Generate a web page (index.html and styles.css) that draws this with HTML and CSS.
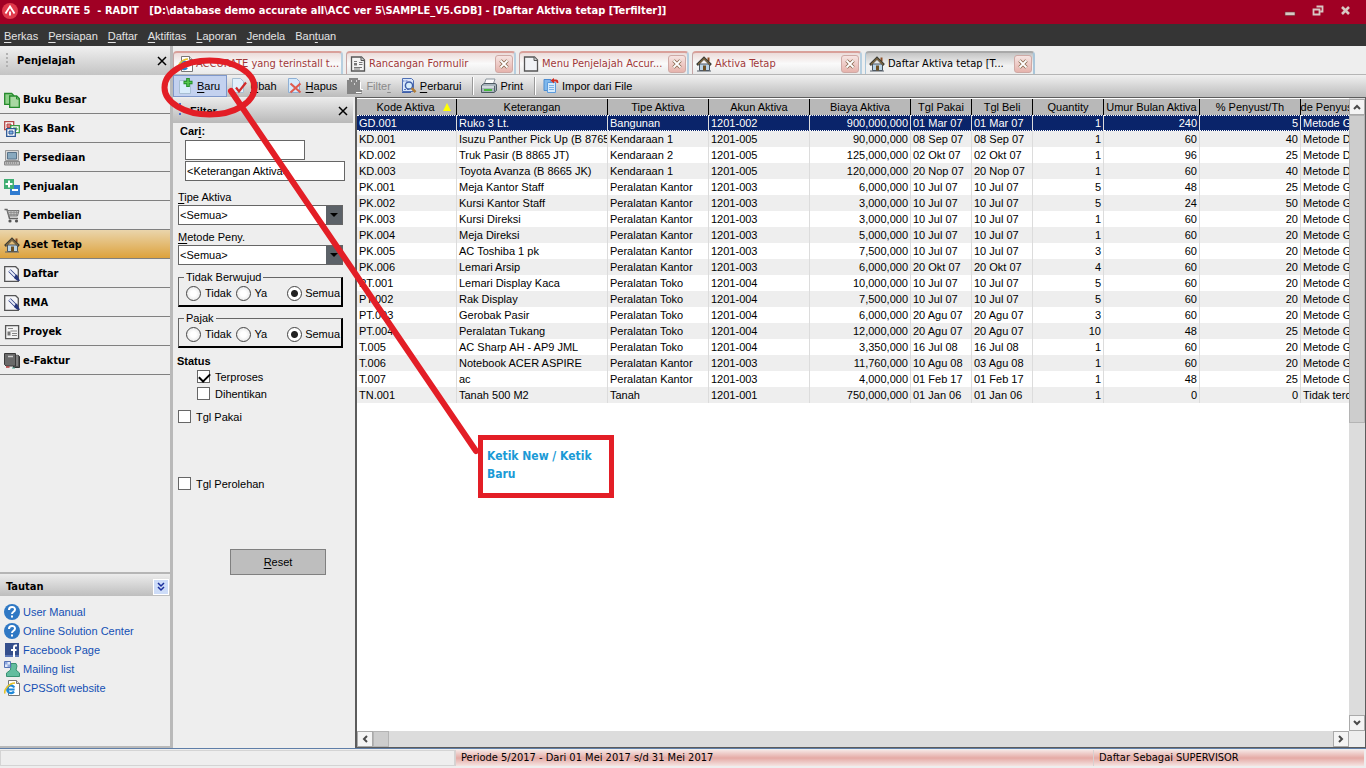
FILE: index.html
```html
<!DOCTYPE html>
<html lang="id">
<head>
<meta charset="utf-8">
<title>ACCURATE 5 - RADIT</title>
<link rel="stylesheet" href="styles.css">
</head>
<body>
<svg width="0" height="0" class="defs" aria-hidden="true">
  <defs>
    <symbol id="i-house" viewBox="0 0 16 16"><path d="M11.500 1.500h2v4h-2z" fill="#8a4a22"/><path d="M3.500 8h10v6.500h-10z" fill="#b9d3e6" stroke="#4a5560"/><path d="M1 9L8 2l7 7" fill="none" stroke="#3d3d35" stroke-width="2.500"/><path d="M2 8.500L8 2.600l6 5.900" fill="none" stroke="#a9834a"/><path d="M7 9.500h3V15H7z" fill="#6d4f22"/><path d="M1 15h14" stroke="#56606a"/></symbol>
    <symbol id="i-web" viewBox="0 0 16 16"><path d="M4.500.5h8l3 3v12h-11z" fill="#fff" stroke="#777"/><path d="M12.500.5v3h3" fill="#ddd" stroke="#777"/><path d="M10.600 9.500H3.500M10.300 7.500A3.800 3.800 0 1 0 10 11.500" fill="none" stroke="#1e88d8" stroke-width="2.200"/><path d="M1 13.500C-.5 10 5 3 11 3" fill="none" stroke="#e6c229" stroke-width="1.600"/></symbol>
    <symbol id="i-form" viewBox="0 0 16 16"><path d="M1.500 1h10l3 3v11h-13z" fill="#f4f4f4" stroke="#555" stroke-width="1.300"/><path d="M11 1v3.500h3.500" fill="#ccc" stroke="#555"/><path d="M4 5.500h3M9 6.500h3.500M9 8.500h3.500M4 11.500h8M4 13h6" stroke="#777"/><path d="M4 7h3v2.500H4z" fill="#777"/></symbol>
    <symbol id="i-page" viewBox="0 0 16 16"><path d="M1.500 1h10l3 3v11h-13z" fill="#f1f3f6" stroke="#555" stroke-width="1.300"/><path d="M11 1v3.500h3.500" fill="#ccc" stroke="#555"/></symbol>
    <symbol id="i-book" viewBox="0 0 16 16"><path d="M.7 1.500h7l2 2v8.800h-9z" fill="#8fd08a" stroke="#258a2c" stroke-width="1.300"/><path d="M5.700 4h7l2.600 2.600v8.700H5.700z" fill="#a9d8a2" stroke="#258a2c" stroke-width="1.300"/><path d="M12.500 4v3h3" fill="none" stroke="#258a2c"/></symbol>
    <symbol id="i-cash" viewBox="0 0 16 16"><path d="M.7.700h9v8h-9z" fill="#fff" stroke="#b44848" stroke-width="1.300"/><path d="M3 3h4v3.500H3z" fill="#e07a7a" stroke="#b44848"/><path d="M6.700 4.700h8.600v7H6.700z" fill="#fff" stroke="#3b9b45" stroke-width="1.300"/><path d="M9 7h4v2H9z" fill="#8fd08a" stroke="#3b9b45"/><path d="M2.700 7.700h8.600v7.600H2.700z" fill="#fff" stroke="#2c5794" stroke-width="1.300"/><path d="M5 10h4v3H5z" fill="#7fb2e6" stroke="#2c5794"/></symbol>
    <symbol id="i-pc" viewBox="0 0 16 16"><path d="M1.500.5h13v10h-13z" fill="#d8d8d8" stroke="#999"/><path d="M3.500 2.500h9v6.500h-9z" fill="#88a9bf" stroke="#58738a"/><path d="M.5 11.500h15v3.500H.5z" fill="#b9b9b9" stroke="#888"/><path d="M2 13h12" stroke="#777" stroke-dasharray="1 1"/></symbol>
    <symbol id="i-sale" viewBox="0 0 16 16"><path d="M6 6h10v10H6z" fill="#2f7bd0"/><path d="M8 11h6" stroke="#fff" stroke-width="2"/><path d="M0 0h10v10H0z" fill="#3fae72"/><path d="M5 1.500v7M1.500 5h7" stroke="#fff" stroke-width="2"/></symbol>
    <symbol id="i-cart" viewBox="0 0 16 16"><path d="M.5 1.500h2.500l2.500 9h8.500" fill="none" stroke="#666" stroke-width="1.500"/><path d="M3.500 2.500h11.500l-1.500 5.500H5z" fill="#c4c4c4" stroke="#777"/><path d="M5 4.500h9M5 6.500h9M7 2v6M10 2v6M12.500 2v6" stroke="#888" stroke-width=".7"/><circle cx="6" cy="13" r="1.600" fill="#555"/><circle cx="12.500" cy="13" r="1.600" fill="#555"/></symbol>
    <symbol id="i-note" viewBox="0 0 16 16"><path d="M.7.700h11l2.600 2.600v12H.7z" fill="#f4f5f8" stroke="#555" stroke-width="1.300"/><path d="M5.500 4.500l7 7" stroke="#26367c" stroke-width="3.400"/><path d="M5.500 4.500l6 6" stroke="#e9eefc" stroke-width="2"/><path d="M11 9.500l2-1 3 6.500-3-.5-3-2.500z" fill="#26367c"/></symbol>
    <symbol id="i-proj" viewBox="0 0 16 16"><path d="M1.600 1.600h13v13h-13z" fill="#f4f4f4" stroke="#555" stroke-width="1.300"/><path d="M4 4.500h5M6.500 7h6.500M8 9.500h5M8 11.500h5" stroke="#888"/><path d="M3.500 7.500h3v4h-3z" fill="#777"/></symbol>
    <symbol id="i-tax" viewBox="0 0 16 16"><path d="M9 2.500h5.500l1 1v11h-6z" fill="#555" stroke="#333"/><path d="M.5.500h11v12.500H2L.5 11.500z" fill="#6a6a6a" stroke="#3a3a3a"/><path d="M4 3.500h5" stroke="#ccc" stroke-width="1.500"/><path d="M2 14h3.500" stroke="#b03838" stroke-width="1.500"/><path d="M8 15h3" stroke="#47a28e"/><path d="M13 1v12" stroke="#aaa"/></symbol>
    <symbol id="i-help" viewBox="0 0 16 16"><circle cx="8" cy="8" r="8" fill="#2f78c4"/><path d="M5 6c0-4 6-4 6-.5C11 8 8 7.500 8 10" fill="none" stroke="#fff" stroke-width="2"/><path d="M7 11.500h2v2H7z" fill="#fff"/></symbol>
    <symbol id="i-fb" viewBox="0 0 16 16"><path d="M1 1h14v14H1z" fill="#354f8c"/><path d="M1 13h14v2H1z" fill="#5b76b4"/><path d="M13 3.500h-1.500Q10 3.500 10 5.500V15M7 8h5.500" fill="none" stroke="#fff" stroke-width="2"/></symbol>
    <symbol id="i-mail" viewBox="0 0 16 16"><path d="M7 2.500h5l1 2.500-1 4 3.500 3v3.500h-13V12l4-3z" fill="#63bd9f" stroke="#399273"/><path d="M.5.500h6v6h-6z" fill="#dfe8fa" stroke="#5673b5"/><path d="M1 1h2.500v2.500H1zM3.500 3.500H6V6H3.500z" fill="#8fa9dd"/></symbol>
    <symbol id="i-new" viewBox="0 0 16 16"><path d="M1.500 2.500h8l3 3v10h-11z" fill="#d9ecfb" stroke="#a8bfd4"/><path d="M10 0v9M5.500 4.500h9" stroke="#1d8a25" stroke-width="3.600"/><path d="M10 .8v7.400M6.300 4.500h7.400" stroke="#55c84e" stroke-width="1.600"/></symbol>
    <symbol id="i-edit" viewBox="0 0 16 16"><path d="M1.500.5h8l3 3v11h-11z" fill="#e1f0fc" stroke="#a8bfd4"/><path d="M5 9.500l3 4 7-9" fill="none" stroke="#d02a2a" stroke-width="2.200"/></symbol>
    <symbol id="i-del" viewBox="0 0 16 16"><path d="M1.500.5h8l3 3v11h-11z" fill="#d4e9fb" stroke="#8fb0d4"/><path d="M3.500 5.500l10 9M13.500 5.500l-10 9" stroke="#df5c50" stroke-width="2.200"/></symbol>
    <symbol id="i-filter" viewBox="0 0 16 16"><path d="M2 0h9v2h2v9h2v5H0V2h2z" fill="#858585"/><path d="M4 3h1M9 3h1M7 6h1" stroke="#eee" stroke-width="1.500"/><path d="M13.500 4v7.500H16M14.500 14.500H9" fill="none" stroke="#fff"/></symbol>
    <symbol id="i-refresh" viewBox="0 0 16 16"><path d="M1.500.5h9l2 2v11h-11z" fill="#d8e7fa" stroke="#4f6fb4"/><path d="M1.500 3h6M3 11.500h5" stroke="#5877c0" stroke-dasharray="2 1"/><circle cx="8" cy="7.500" r="3.600" fill="#d6edfb" stroke="#3f5fa9" stroke-width="1.500"/><path d="M10.700 10.200l3.800 4" stroke="#b07b35" stroke-width="2.600"/><path d="M1 14.500h9" stroke="#3f5fa9"/></symbol>
    <symbol id="i-print" viewBox="0 0 16 16"><path d="M5 1h9l-2 6H3z" fill="#fdfdfd" stroke="#8a949c"/><path d="M.5 7.500L3 5.500h11l1.500 1v6l-2.500 2H.5z" fill="#a8b4bc" stroke="#4d5962"/><path d="M1 9h12" stroke="#fff"/><path d="M3 12h8" stroke="#46b83c" stroke-width="2"/><path d="M13.500 8v5.500" stroke="#56626b"/></symbol>
    <symbol id="i-import" viewBox="0 0 16 16"><path d="M1 1.500h7v11H1z" fill="#7fb8ec" stroke="#4a8bd0"/><path d="M4.500 4.500h8v10h-8z" fill="#d6ebfc" stroke="#5c9bdc"/><path d="M6 7.500h5M6 9.500h5M6 11.500h5" stroke="#7fb2e6"/><path d="M9.500 2.500h3.500q1.500 0 1.500 2.500" fill="none" stroke="#cf3024" stroke-width="1.800"/><path d="M11 0v5.500L7.500 2.600z" fill="#cf3024"/></symbol>
    <symbol id="i-x" viewBox="0 0 10 10"><path d="M1 1l8 8M9 1L1 9" stroke="currentColor" stroke-width="1.500"/></symbol>
    <symbol id="i-tabx" viewBox="0 0 10 10"><path d="M1.500 1.500l7 7M8.500 1.500l-7 7" stroke="#8a6a50" stroke-width="3.400"/><path d="M1.500 1.500l7 7M8.500 1.500l-7 7" stroke="#fff" stroke-width="1.800"/></symbol>
    <symbol id="i-up" viewBox="0 0 8 8"><path d="M1 6l3-3 3 3" fill="none" stroke="#4a4a4a" stroke-width="2"/></symbol>
  </defs>
</svg>
<div class="app">
  <header class="titlebar">
    <svg class="logo" viewBox="0 0 16 16"><circle cx="8" cy="8" r="8" fill="#e03a4c"/><path d="M3.500 10.500L8 3.500l4.500 7M8 8.500v4" fill="none" stroke="#fff" stroke-width="1.800"/></svg>
    <h1>ACCURATE 5&nbsp; - RADIT&nbsp;&nbsp; [D:\database demo accurate all\ACC ver 5\SAMPLE_V5.GDB] - [Daftar Aktiva tetap [Terfilter]]</h1>
    <div class="winbtns">
      <button aria-label="Minimize"><svg viewBox="0 0 12 12"><path d="M1 7h10v3.500H1z" fill="#d8c8c4" stroke="#6d3038" stroke-width=".6"/></svg></button>
      <button aria-label="Restore"><svg viewBox="0 0 12 12"><path d="M4.500 1.500h6v5h-2M1.500 4.500h6v5h-6z" fill="none" stroke="#d8c8c4" stroke-width="1.800"/></svg></button>
      <button aria-label="Close"><svg viewBox="0 0 12 12"><path d="M2 2l7 7M9 2L2 9" stroke="#d8c8c4" stroke-width="2.600"/></svg></button>
    </div>
  </header>
  <nav class="menubar">
    <button><u>B</u>erkas</button><button><u>P</u>ersiapan</button><button><u>D</u>aftar</button><button><u>A</u>ktifitas</button><button><u>L</u>aporan</button><button><u>J</u>endela</button><button>Ban<u>t</u>uan</button>
  </nav>
  <div class="body">
    <aside class="sidebar">
      <div class="panel-head"><i class="grip"></i><h2>Penjelajah</h2><button class="close" aria-label="Tutup"><svg><use href="#i-x"/></svg></button></div>
      <nav class="modules">
        <button><svg><use href="#i-book"/></svg>Buku Besar</button>
        <button><svg><use href="#i-cash"/></svg>Kas Bank</button>
        <button><svg><use href="#i-pc"/></svg>Persediaan</button>
        <button><svg><use href="#i-sale"/></svg>Penjualan</button>
        <button><svg><use href="#i-cart"/></svg>Pembelian</button>
        <button class="active"><svg><use href="#i-house"/></svg>Aset Tetap</button>
        <button><svg><use href="#i-note"/></svg>Daftar</button>
        <button><svg><use href="#i-note"/></svg>RMA</button>
        <button><svg><use href="#i-proj"/></svg>Proyek</button>
        <button><svg><use href="#i-tax"/></svg>e-Faktur</button>
      </nav>
      <section class="links">
        <div class="links-head"><h2>Tautan</h2><button aria-label="Ciutkan"><svg viewBox="0 0 10 10"><path d="M2 1l3 3 3-3M2 5l3 3 3-3" fill="none" stroke="#1a2f9c" stroke-width="1.500"/></svg></button></div>
        <ul>
          <li><a href="#"><svg><use href="#i-help"/></svg>User Manual</a></li>
          <li><a href="#"><svg><use href="#i-help"/></svg>Online Solution Center</a></li>
          <li><a href="#"><svg><use href="#i-fb"/></svg>Facebook Page</a></li>
          <li><a href="#"><svg><use href="#i-mail"/></svg>Mailing list</a></li>
          <li><a href="#"><svg><use href="#i-web"/></svg>CPSSoft website</a></li>
        </ul>
      </section>
    </aside>
    <main class="main">
      <div class="tabs">
        <div class="tab"><svg><use href="#i-web"/></svg><span>ACCURATE yang terinstall t...</span></div>
        <div class="tab"><svg><use href="#i-form"/></svg><span>Rancangan Formulir</span><button aria-label="Tutup tab"><svg><use href="#i-tabx"/></svg></button></div>
        <div class="tab"><svg><use href="#i-page"/></svg><span>Menu Penjelajah Accur...</span><button aria-label="Tutup tab"><svg><use href="#i-tabx"/></svg></button></div>
        <div class="tab"><svg><use href="#i-house"/></svg><span>Aktiva Tetap</span><button aria-label="Tutup tab"><svg><use href="#i-tabx"/></svg></button></div>
        <div class="tab current"><svg><use href="#i-house"/></svg><span>Daftar Aktiva tetap [T...</span><button aria-label="Tutup tab"><svg><use href="#i-tabx"/></svg></button></div>
      </div>
      <div class="toolbar">
        <button class="hot"><svg><use href="#i-new"/></svg><span><u>B</u>aru</span></button>
        <button><svg><use href="#i-edit"/></svg><span><u>U</u>bah</span></button>
        <button><svg><use href="#i-del"/></svg><span><u>H</u>apus</span></button>
        <button class="off"><svg><use href="#i-filter"/></svg><span>Filte<u>r</u></span></button>
        <button><svg><use href="#i-refresh"/></svg><span><u>P</u>erbarui</span></button>
        <i class="sep"></i>
        <button><svg><use href="#i-print"/></svg><span>Print</span></button>
        <i class="sep"></i>
        <button><svg><use href="#i-import"/></svg><span>Impor dari File</span></button>
      </div>
      <div class="work">
        <form class="filter">
          <div class="filter-head"><i class="grip"></i><h2>Filter</h2><button type="button" class="close" aria-label="Tutup"><svg><use href="#i-x"/></svg></button></div>
          <div class="search">
            <label for="cari">Car<u>i</u>:</label>
            <input id="cari" type="text">
            <select aria-label="Cari pada"><option>&lt;Keterangan Aktiva&gt;</option></select>
          </div>
          <label class="field"><span><u>T</u>ipe Aktiva</span><span class="combo"><select><option>&lt;Semua&gt;</option></select></span></label>
          <label class="field"><span><u>M</u>etode Peny.</span><span class="combo"><select><option>&lt;Semua&gt;</option></select></span></label>
          <fieldset><legend>Tidak Berwujud</legend><div class="radios">
            <label><input type="radio" name="tb">Tidak</label><label><input type="radio" name="tb">Ya</label><label class="last"><input type="radio" name="tb" checked>Semua</label></div></fieldset>
          <fieldset><legend>Pajak</legend><div class="radios">
            <label><input type="radio" name="pj">Tidak</label><label><input type="radio" name="pj">Ya</label><label class="last"><input type="radio" name="pj" checked>Semua</label></div></fieldset>
          <div class="status">
            <h3>Status</h3>
            <label class="check sub"><input type="checkbox" checked>Terproses</label>
            <label class="check sub"><input type="checkbox">Dihentikan</label>
          </div>
          <label class="check used"><input type="checkbox">Tgl Pakai</label>
          <label class="check bought"><input type="checkbox">Tgl Perolehan</label>
          <button type="reset" class="reset"><u>R</u>eset</button>
        </form>
        <div class="grid">
          <div class="view">
          <table>
            <colgroup><col class="w100"><col class="w151"><col class="w101"><col class="w101"><col class="w101"><col class="w61"><col class="w61"><col class="w71"><col class="w96"><col class="w101"><col></colgroup>
            <thead><tr><th class="sorted">Kode Aktiva<svg class="sort" viewBox="0 0 8 8"><path d="M4 0l4 8H0z" fill="#ffff00"/></svg></th><th>Keterangan</th><th>Tipe Aktiva</th><th>Akun Aktiva</th><th>Biaya Aktiva</th><th>Tgl Pakai</th><th>Tgl Beli</th><th>Quantity</th><th>Umur Bulan Aktiva</th><th>% Penyust/Th</th><th class="cut"><span>Metode Penyusutan</span></th></tr></thead>
            <tbody>
            <tr class="sel"><td>GD.001<td>Ruko 3 Lt.<td>Bangunan<td>1201-002<td>900,000,000<td>01 Mar 07<td>01 Mar 07<td>1<td>240<td>5<td>Metode Garis Lurus</tr>
            <tr><td>KD.001<td>Isuzu Panther Pick Up (B 8765<td>Kendaraan 1<td>1201-005<td>90,000,000<td>08 Sep 07<td>08 Sep 07<td>1<td>60<td>40<td>Metode DDB</tr>
            <tr><td>KD.002<td>Truk Pasir (B 8865 JT)<td>Kendaraan 2<td>1201-005<td>125,000,000<td>02 Okt 07<td>02 Okt 07<td>1<td>96<td>25<td>Metode DDB</tr>
            <tr><td>KD.003<td>Toyota Avanza (B 8665 JK)<td>Kendaraan 1<td>1201-005<td>120,000,000<td>20 Nop 07<td>20 Nop 07<td>1<td>60<td>40<td>Metode DDB</tr>
            <tr><td>PK.001<td>Meja Kantor Staff<td>Peralatan Kantor<td>1201-003<td>6,000,000<td>10 Jul 07<td>10 Jul 07<td>5<td>48<td>25<td>Metode Garis Lurus</tr>
            <tr><td>PK.002<td>Kursi Kantor Staff<td>Peralatan Kantor<td>1201-003<td>3,000,000<td>10 Jul 07<td>10 Jul 07<td>5<td>24<td>50<td>Metode Garis Lurus</tr>
            <tr><td>PK.003<td>Kursi Direksi<td>Peralatan Kantor<td>1201-003<td>3,000,000<td>10 Jul 07<td>10 Jul 07<td>1<td>60<td>20<td>Metode Garis Lurus</tr>
            <tr><td>PK.004<td>Meja Direksi<td>Peralatan Kantor<td>1201-003<td>5,000,000<td>10 Jul 07<td>10 Jul 07<td>1<td>60<td>20<td>Metode Garis Lurus</tr>
            <tr><td>PK.005<td>AC Toshiba 1 pk<td>Peralatan Kantor<td>1201-003<td>7,500,000<td>10 Jul 07<td>10 Jul 07<td>3<td>60<td>20<td>Metode Garis Lurus</tr>
            <tr><td>PK.006<td>Lemari Arsip<td>Peralatan Kantor<td>1201-003<td>6,000,000<td>20 Okt 07<td>20 Okt 07<td>4<td>60<td>20<td>Metode Garis Lurus</tr>
            <tr><td>PT.001<td>Lemari Display Kaca<td>Peralatan Toko<td>1201-004<td>10,000,000<td>10 Jul 07<td>10 Jul 07<td>5<td>60<td>20<td>Metode Garis Lurus</tr>
            <tr><td>PT.002<td>Rak Display<td>Peralatan Toko<td>1201-004<td>7,500,000<td>10 Jul 07<td>10 Jul 07<td>5<td>60<td>20<td>Metode Garis Lurus</tr>
            <tr><td>PT.003<td>Gerobak Pasir<td>Peralatan Toko<td>1201-004<td>6,000,000<td>20 Agu 07<td>20 Agu 07<td>3<td>60<td>20<td>Metode Garis Lurus</tr>
            <tr><td>PT.004<td>Peralatan Tukang<td>Peralatan Toko<td>1201-004<td>12,000,000<td>20 Agu 07<td>20 Agu 07<td>10<td>48<td>25<td>Metode Garis Lurus</tr>
            <tr><td>T.005<td>AC Sharp AH - AP9 JML<td>Peralatan Toko<td>1201-004<td>3,350,000<td>16 Jul 08<td>16 Jul 08<td>1<td>60<td>20<td>Metode Garis Lurus</tr>
            <tr><td>T.006<td>Notebook ACER ASPIRE<td>Peralatan Kantor<td>1201-003<td>11,760,000<td>10 Agu 08<td>03 Agu 08<td>1<td>60<td>20<td>Metode Garis Lurus</tr>
            <tr><td>T.007<td>ac<td>Peralatan Kantor<td>1201-003<td>4,000,000<td>01 Feb 17<td>01 Feb 17<td>1<td>48<td>25<td>Metode Garis Lurus</tr>
            <tr><td>TN.001<td>Tanah 500 M2<td>Tanah<td>1201-001<td>750,000,000<td>01 Jan 06<td>01 Jan 06<td>1<td>0<td>0<td>Tidak terdepresiasi</tr>
            </tbody>
          </table>
          </div>
          <div class="vbar"><button aria-label="Naik"><svg><use href="#i-up"/></svg></button><i></i><button aria-label="Turun" class="down"><svg><use href="#i-up"/></svg></button></div>
          <div class="hbar"><button aria-label="Kiri" class="left"><svg><use href="#i-up"/></svg></button><i></i><button aria-label="Kanan" class="right"><svg><use href="#i-up"/></svg></button></div>
          <div class="corner"></div>
        </div>
      </div>
    </main>
  </div>
  <footer class="statusbar"><span class="blank"></span><span>Periode 5/2017 - Dari 01 Mei 2017 s/d 31 Mei 2017</span><span>Daftar Sebagai SUPERVISOR</span></footer>
  <svg class="marks" viewBox="0 0 620 500" aria-hidden="true"><ellipse cx="209.500" cy="87.500" rx="45" ry="27"/><path d="M231 91L476 451"/></svg>
  <p class="callout">Ketik New / Ketik Baru</p>
</div>
</body>
</html>
```
FILE: styles.css
```css
* { box-sizing: border-box; }
:root {
  --ui: "DejaVu Sans Condensed", "DejaVu Sans", sans-serif;
  --sys: "Liberation Sans", Arial, sans-serif;
  --face: #eeeeee;
  --mark: #e31e26;
}
html, body { height: 100%; margin: 0; }
body { font: 11px/16px var(--sys); color: #000; background: var(--face); }
h1, h2, h3, p, ul, fieldset { margin: 0; padding: 0; font-size: 11px; }
button, input, select { font: inherit; color: inherit; }
button { margin: 0; padding: 0; border: 0; background: none; }
u { text-underline-offset: 2px; }
.defs { position: absolute; }
.app { position: relative; display: flex; flex-direction: column; height: 100vh; overflow: hidden; }

.titlebar { display: flex; align-items: center; gap: 4px; height: 24px; padding: 0 14px 3px 2px; background: #a00024; color: #fff; font-family: var(--ui); }
.titlebar h1 { flex: 1; white-space: nowrap; overflow: hidden; }
.logo { width: 16px; height: 16px; }
.winbtns { display: flex; gap: 16px; }
.winbtns button, .winbtns svg { display: block; width: 12px; height: 12px; }

.menubar { display: flex; align-items: center; gap: 10px; height: 22px; padding: 2px 4px 0; background: #353535; color: #e4e4e4; }

.body { flex: 1; display: flex; min-height: 0; }
.sidebar { flex: none; width: 173px; display: flex; flex-direction: column; border-right: 3px solid #b9b9b9; border-bottom: 2px solid #b9b9b9; font-family: var(--ui); }
.panel-head, .filter-head { display: flex; align-items: center; background: linear-gradient(#eaeaea, #b9b9b9); }
.panel-head { height: 29px; padding: 0 3px 0 6px; background: linear-gradient(#f0f0f0, #c4c4c4); }
.panel-head h2, .filter-head h2 { flex: 1; }
.panel-head h2 { padding-left: 9px; }
.grip { width: 2px; height: 15px; background: repeating-linear-gradient(#b2b2b2 0 2px, transparent 2px 4px); }
.close { display: flex; }
.close svg { width: 10px; height: 10px; }
.modules { flex: 1; padding-top: 10px; }
.modules button { display: flex; align-items: center; gap: 3px; width: 100%; height: 29px; padding: 2px 0 0 4px; border-bottom: 1px solid #808080; font-weight: bold; }
.modules svg, .links li svg, .tab > svg, .toolbar svg { flex: none; width: 16px; height: 16px; }
.modules .active { background: linear-gradient(#ead5ac, #dda23c); }
.links { height: 174px; border-top: 2px solid #b5b5b5; }
.links-head { display: flex; align-items: center; justify-content: space-between; height: 22px; padding: 3px 1px 0 6px; background: linear-gradient(#ececec, #bebebe); }
.links-head button { display: flex; padding: 2px; background: #cddcf8; border: 1px solid #fff; }
.links-head svg { width: 10px; height: 10px; }
.links ul { padding: 6px 4px; list-style: none; font-family: var(--sys); }
.links a { display: flex; align-items: center; gap: 3px; height: 19px; color: #1450b4; text-decoration: none; }

.main { flex: 1; min-width: 0; display: flex; flex-direction: column; }
.tabs { display: flex; gap: 3px; height: 29px; padding-top: 5px; border-bottom: 1px solid #b5b5b5; }
.tab { display: flex; align-items: center; gap: 3px; width: 170px; padding: 0 1px 0 3px; border: 1px solid #c5a5a5; border-top: 2px solid #d9a09a; border-right: 2px solid #b7cfe0; border-bottom: 0; border-radius: 4px 4px 0 0; background: linear-gradient(#ecdcda, #fafafa 50%, #e9e9e9); color: #a03838; font-family: var(--ui); white-space: nowrap; }
.tab span { flex: 1; }
.tab button { display: flex; padding: 3px; border: 1px solid #cfa9a5; border-radius: 3px; background: linear-gradient(#f6e4e2, #e6b3ac); }
.tab button svg { width: 10px; height: 10px; }
.current { border-color: #a9a9a9 #a9c6da transparent #a9c6da; background: linear-gradient(#c5c5c5, #f2f2f2 60%, #ededed); color: #000; }

.toolbar { display: flex; align-items: center; height: 22px; background: linear-gradient(#f0f0f0, #bcbcbc); }
.toolbar button { display: flex; align-items: center; gap: 3px; height: 22px; padding: 0 6px 0 4px; white-space: nowrap; }
.toolbar .hot { border: 1px solid #7f98ca; background: #c3d1ef; }
.toolbar .off { color: #8a8a8a; }
.sep { width: 2px; height: 18px; margin: 0 3px 0 5px; border-left: 1px solid #999; border-right: 1px solid #fff; }

.work { flex: 1; display: flex; min-height: 0; }
.filter { flex: none; width: 182px; display: flex; flex-direction: column; padding: 1px 2px 0 0; }
.filter-head { height: 25px; padding: 0 5px 0 6px; }
.filter-head h2 { padding-left: 9px; }
.filter-head .grip { background: repeating-linear-gradient(#4a6fd0 0 2px, transparent 2px 5px); }
.search { display: flex; flex-direction: column; gap: 1px; padding: 0 8px 0 12px; }
.search label { align-self: flex-start; margin-left: -5px; font-weight: bold; }
.search input { width: 120px; height: 20px; border: 1px solid #666; background: #fff; }
.search select { appearance: none; width: 160px; height: 20px; padding: 0 1px; border: 1px solid #666; border-radius: 0; background: #fff; }
.field { display: block; height: 40px; padding: 0 10px 0 5px; }
.search + .field { margin-top: 8px; }
.field > span { display: block; }
.combo { position: relative; }
.combo select { display: block; appearance: none; width: 100%; height: 20px; padding: 0 18px 0 1px; border: 1px solid #666; border-radius: 0; background: linear-gradient(#5c6268, #5c6268) right / 16px 100% no-repeat #fff; }
.combo::after { content: ""; position: absolute; right: 5px; top: 8px; border: 4px solid transparent; border-top-color: #000; border-bottom: 0; }
fieldset { height: 38px; margin: 0 10px 3px 5px; border: 1px solid #666; border-right: 2px solid #000; border-bottom: 2px solid #000; }
legend { margin-left: 5px; padding: 0 2px; }
.radios { display: flex; align-items: center; gap: 4px; padding: 0 1px 0 7px; }
.radios label { display: flex; align-items: center; gap: 4px; }
.radios .last { margin-left: auto; gap: 3px; }
input[type="radio"] { appearance: none; width: 15px; height: 15px; margin: 0; border: 1px solid #444; border-radius: 50%; background: radial-gradient(#fff 30%, #ddd); }
input[type="radio"]:checked { background: radial-gradient(#222 0 3px, #fff 4px); }
.status { padding: 3px 0 0 4px; }
.status h3 { line-height: 14px; }
.check { display: flex; align-items: center; gap: 5px; height: 17px; padding-left: 5px; }
.sub { padding-left: 20px; }
.check input { appearance: none; width: 13px; height: 13px; margin: 0; border: 1px solid #666; background: #fff; }
.check input:checked::before { content: ""; display: block; width: 9px; height: 5px; margin: 2px 1px; border: solid #000; border-width: 0 0 2px 2px; transform: rotate(-45deg); }
.used { margin-top: 6px; }
.bought { margin-top: 50px; }
.reset { width: 96px; height: 26px; margin: 57px 0 0 57px; border: 1px solid #808080; background: #bebebe; }

.grid { flex: 1; min-width: 0; display: grid; grid-template: 1fr 16px / 1fr 16px; border: 1px solid #5c5c5c; border-width: 1px 1px 1px 2px; background: #fff; }
.view { min-width: 0; overflow: hidden; padding-top: 1px; }
table { width: 100%; table-layout: fixed; border-collapse: separate; border-spacing: 0; }
.w61 { width: 61px; } .w71 { width: 71px; } .w96 { width: 96px; }
.w100 { width: 100px; } .w101 { width: 101px; } .w151 { width: 151px; }
th, td { height: 16px; padding: 0 0 0 2px; line-height: 16px; overflow: hidden; white-space: nowrap; text-align: left; border-right: 1px solid #dcdcdc; }
th { padding: 0; background: #b8b8b8; font-weight: normal; text-align: center; border-right-color: #000; }
th:last-child, td:last-child { border-right: 0; }
.sorted { padding-left: 14px; }
.sort { width: 8px; height: 8px; margin-left: 8px; }
.cut span { display: flex; justify-content: center; }
td:nth-child(5), td:nth-child(8), td:nth-child(9), td:nth-child(10) { padding-right: 2px; text-align: right; }
tbody tr:nth-child(even) td { background: #eeeeee; }
tbody .sel td { background: #0a246a; color: #fff; line-height: 14px; border-top: 1px dotted #fff; border-bottom: 1px dotted #fff; }
.vbar, .hbar { display: flex; background: #dcdcdc; }
.vbar { flex-direction: column; padding-top: 1px; }
.vbar i { height: 308px; border: 1px solid #b4b4b4; background: #cdcdcd; }
.hbar i { width: 16px; border: 1px solid #b4b4b4; background: #cdcdcd; }
.vbar button, .hbar button { display: grid; place-items: center; width: 16px; height: 16px; border: 1px solid #aaa; background: #f4f4f4; }
.vbar svg, .hbar svg { width: 8px; height: 8px; }
.down { margin-top: auto; transform: rotate(180deg); }
.left { transform: rotate(-90deg); }
.right { margin-left: auto; transform: rotate(90deg); }
.corner { background: var(--face); }

.statusbar { flex: none; display: grid; grid-template-columns: 455fr 638fr 271fr; height: 20px; padding: 1px 2px 2px 0; border-top: 1px solid #5f7ea8; background: var(--face); font-family: var(--ui); }
.statusbar span { padding: 0 5px; border-left: 1px solid #d8d0d0; background: linear-gradient(#f5e6e4, #e5aaa5 50%, #f5e4e2); white-space: nowrap; }
.statusbar .blank { border: 1px solid #d4d4d4; background: none; }

.marks { position: absolute; left: 0; top: 0; width: 620px; height: 500px; fill: none; stroke: var(--mark); stroke-width: 6; stroke-linecap: round; pointer-events: none; }
.callout { position: absolute; left: 478px; top: 435px; width: 136px; height: 63px; padding: 7px 4px; border: 5px solid var(--mark); background: #fff; color: #1a9ad6; font: bold 12px/18px var(--ui); }
```
